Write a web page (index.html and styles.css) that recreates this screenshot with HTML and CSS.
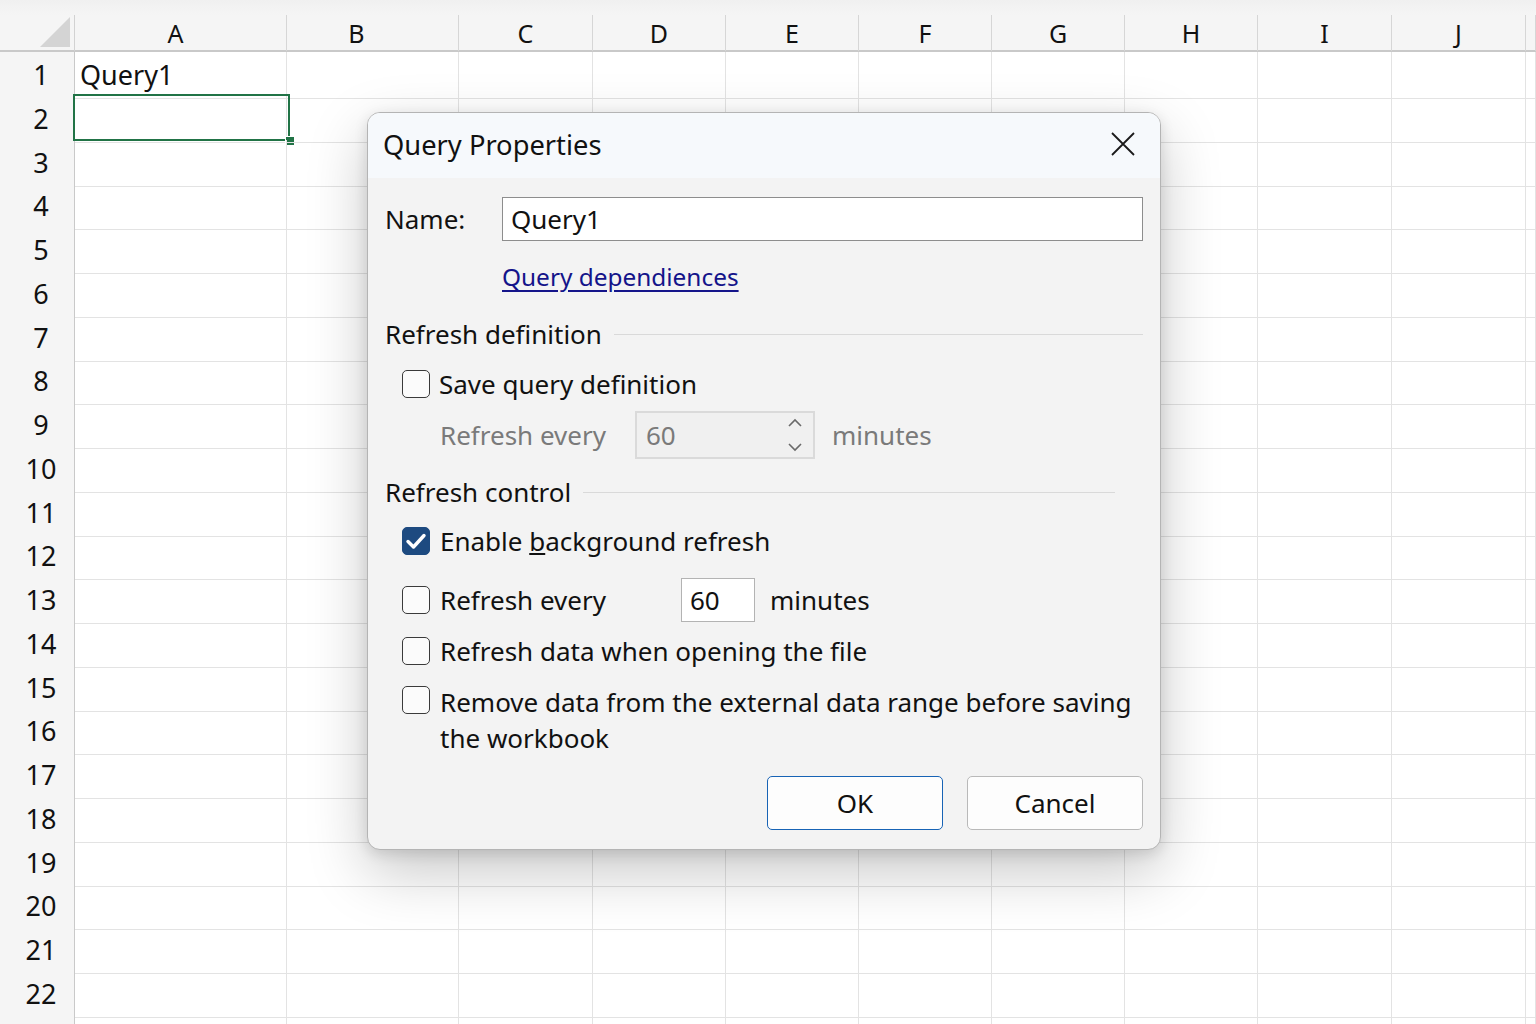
FILE: index.html
```html
<!DOCTYPE html>
<html lang="en">
<head>
  <meta charset="UTF-8">
  <title>Query Properties</title>
  <link rel="stylesheet" href="styles.css">
</head>
<body>
  <div class="sheet">
    <div class="strip"></div>
    <div class="row head">
      <div class="corner"><span class="tri"></span></div>
      <div class="ch col-a">A</div><div class="ch col-b">B</div><div class="ch">C</div><div class="ch">D</div><div class="ch">E</div>
      <div class="ch">F</div><div class="ch">G</div><div class="ch">H</div><div class="ch">I</div><div class="ch">J</div><div class="ch"></div>
    </div>
    <div id="rows"></div>
  </div>

  <div class="dialog">
    <div class="titlebar">
      <span class="title">Query Properties</span>
      <svg class="close" width="24" height="24" viewBox="0 0 24 24"><path d="M1 1 L23 23 M23 1 L1 23" stroke="#1a1a1a" stroke-width="1.8" fill="none"/></svg>
    </div>
    <div class="body">
      <div class="name-row">
        <label class="name-label">Name:</label>
        <div class="textbox">Query1</div>
      </div>
      <div class="link-row"><a class="link">Query dependiences</a></div>

      <div class="section"><span>Refresh definition</span><span class="rule"></span></div>
      <div class="check-row r-save"><span class="box"></span><span>Save query definition</span></div>
      <div class="spin-row">
        <span class="dim spin-label">Refresh every</span>
        <div class="spin">
          <span>60</span>
          <svg class="arrows" width="16" height="34" viewBox="0 0 16 34"><path d="M2 8 L8 2 L14 8 M2 26 L8 32 L14 26" stroke="#6a6a6a" stroke-width="1.6" fill="none"/></svg>
        </div>
        <span class="dim">minutes</span>
      </div>

      <div class="section s2"><span>Refresh control</span><span class="rule short"></span></div>
      <div class="check-row r-enable">
        <span class="box on"><svg width="28" height="28" viewBox="0 0 28 28"><path d="M6 14.5 L11.5 20 L22 8.5" stroke="#fff" stroke-width="3.4" fill="none" stroke-linecap="round" stroke-linejoin="round"/></svg></span>
        <span>Enable <u>b</u>ackground refresh</span>
      </div>
      <div class="check-row r-every">
        <span class="box"></span><span class="every">Refresh every</span>
        <div class="smallbox">60</div>
        <span>minutes</span>
      </div>
      <div class="check-row r-open"><span class="box"></span><span>Refresh data when opening the file</span></div>
      <div class="check-row r-remove"><span class="box"></span><span>Remove data from the external data range before saving<br>the workbook</span></div>

      <div class="buttons">
        <button class="btn ok">OK</button>
        <button class="btn">Cancel</button>
      </div>
    </div>
  </div>

  <script>
    var rows = document.getElementById('rows');
    for (var i = 1; i <= 23; i++) {
      var html = '<div class="row"><div class="rh">' + (i < 23 ? i : '') + '</div>';
      for (var c = 0; c < 11; c++) {
        var txt = (i === 1 && c === 0) ? 'Query1' : '';
        var extra = (i === 2 && c === 0) ? '<span class="sel"><span class="handle"></span></span>' : '';
        html += '<div class="cell">' + txt + extra + '</div>';
      }
      rows.innerHTML += html + '</div>';
    }
  </script>
</body>
</html>
```

FILE: styles.css
```css
body {
  margin: 0;
  font-family: 'Noto Sans', sans-serif;
  color: #111;
  background: #fff;
  overflow: hidden;
  height: 1024px;
}

.sheet {
  width: 1536px;
}

.strip {
  height: 15px;
  background: linear-gradient(#f0f0f0, #f5f5f5);
}

.row {
  display: grid;
  grid-template-columns: 75px 212px 172px 134px 133px 133px 133px 133px 133px 134px 134px 1fr;
  height: 43.75px;
}

.row.head {
  height: 37px;
  background: #f5f5f5;
  border-bottom: 2px solid #c9c9c9;
  box-sizing: border-box;
}

.corner {
  border-right: 1px solid #d2d2d2;
  position: relative;
}

.tri {
  position: absolute;
  left: 40px;
  top: 2px;
  width: 0;
  height: 0;
  border-left: 30px solid transparent;
  border-bottom: 30px solid #d4d4d4;
}

.ch {
  border-right: 1px solid #d6d6d6;
  font-size: 25px;
  text-align: center;
  line-height: 36px;
}

.ch.col-a {
  padding-right: 10px;
}

.ch.col-b {
  padding-right: 32px;
}

.rh {
  background: #f5f5f5;
  border-right: 1px solid #c9c9c9;
  border-bottom: 1px solid #dcdcdc;
  font-size: 27px;
  line-height: 46px;
  text-align: center;
  padding-left: 8px;
}

.cell {
  border-right: 1px solid #e3e3e3;
  border-bottom: 1px solid #e3e3e3;
  font-size: 27px;
  line-height: 46px;
  padding-left: 5px;
  position: relative;
}

.sel {
  position: absolute;
  left: -2px;
  top: -2px;
  width: 213px;
  height: 43px;
  border: 2px solid #217346;
}

.handle {
  position: absolute;
  right: -7px;
  bottom: -7px;
  width: 8px;
  height: 8px;
  background: #217346;
  border: 1px solid #fff;
}

/* dialog */
.dialog {
  position: absolute;
  left: 367px;
  top: 112px;
  width: 794px;
  height: 738px;
  box-sizing: border-box;
  border: 1px solid #b4b4b4;
  border-radius: 13px;
  background: #f3f3f3;
  box-shadow: 0 22px 60px rgba(0, 0, 0, 0.22), 0 4px 14px rgba(0, 0, 0, 0.12);
  overflow: hidden;
  font-size: 26px;
  line-height: 32px;
}

.titlebar {
  height: 65px;
  background: #f6f9fc;
  display: flex;
  align-items: center;
  justify-content: space-between;
  padding: 0 25px 0 15px;
}

.title {
  font-size: 27.3px;
  color: #111;
  margin-top: -2px;
}

.close {
  margin-top: -3px;
}

.body {
  padding: 19px 17px 0 17px;
  display: flex;
  flex-direction: column;
}

.name-row {
  display: flex;
  align-items: center;
  height: 44px;
}

.name-label {
  width: 117px;
}

.textbox {
  flex: 1;
  height: 44px;
  box-sizing: border-box;
  border: 1px solid #8d8d8d;
  background: #fff;
  line-height: 42px;
  padding-left: 8px;
}

.link-row {
  margin-top: 17px;
  height: 36px;
  line-height: 36px;
  padding-left: 117px;
}

.link {
  color: #14148a;
  font-size: 24.4px;
  text-decoration: underline;
  text-underline-offset: 4px;
}

.section {
  display: flex;
  align-items: center;
  height: 36px;
  margin-top: 22px;
}

.section.s2 {
  margin-top: 15px;
}

.rule {
  flex: 1;
  height: 1px;
  background: #d9d9d9;
  margin-left: 12px;
}

.rule.short {
  margin-right: 28px;
}

.check-row {
  display: flex;
  align-items: center;
  padding-left: 17px;
  height: 32px;
}

.box {
  width: 28px;
  height: 28px;
  box-sizing: border-box;
  border: 1.5px solid #3a3a3a;
  border-radius: 5px;
  background: #fbfbfb;
  margin-right: 10px;
  flex: none;
}

.box.on {
  background: #1d4a80;
  border-color: #1d4a80;
}

.box.on svg {
  display: block;
  margin: -1.5px;
}

.r-save {
  margin-top: 16px;
}

.r-save .box {
  margin-right: 9px;
}

.spin-row {
  display: flex;
  align-items: center;
  height: 48px;
  margin-top: 11px;
  padding-left: 55px;
}

.dim {
  color: #7a7a7a;
}

.spin-label {
  width: 195px;
}

.spin {
  width: 180px;
  height: 48px;
  box-sizing: border-box;
  border: 2px solid #dadada;
  background: #f0f0f0;
  margin-right: 17px;
  display: flex;
  align-items: center;
  justify-content: space-between;
  padding: 0 10px 0 9px;
  color: #7a7a7a;
}

.r-enable {
  margin-top: 15px;
}

.r-every {
  margin-top: 21px;
  height: 44px;
}

.every {
  width: 241px;
}

.smallbox {
  width: 74px;
  height: 44px;
  box-sizing: border-box;
  border: 1px solid #b3b3b3;
  background: #fff;
  line-height: 42px;
  padding-left: 8px;
  margin-right: 15px;
}

.r-open {
  margin-top: 13px;
}

.r-remove {
  margin-top: 17px;
  height: auto;
  align-items: flex-start;
  line-height: 36px;
}

.r-remove .box {
  margin-top: 2px;
}

.buttons {
  display: flex;
  justify-content: flex-end;
  gap: 24px;
  margin-top: 20px;
}

.btn {
  width: 176px;
  height: 54px;
  font-family: 'Noto Sans', sans-serif;
  font-size: 26px;
  color: #111;
  background: #fdfdfd;
  border: 1px solid #b9b9b9;
  border-radius: 5px;
}

.btn.ok {
  border: 1.5px solid #1763b5;
}
```
